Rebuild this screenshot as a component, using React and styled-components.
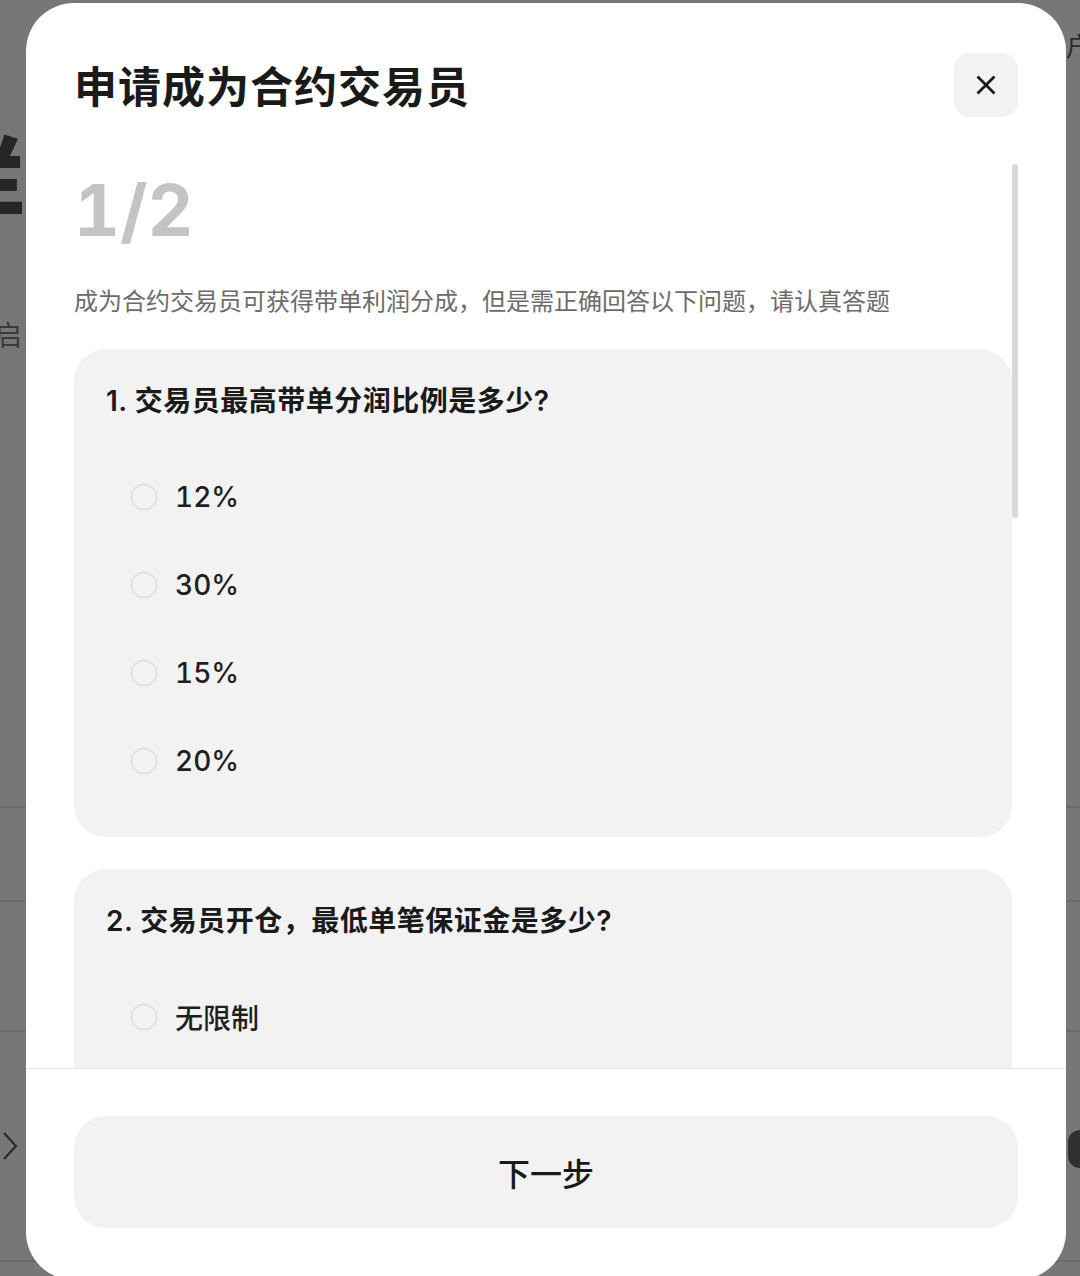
import React from 'react';
import styled, { createGlobalStyle } from 'styled-components';

const GlobalStyle = createGlobalStyle`
  * { box-sizing: border-box; }
  body {
    margin: 0;
    background: #777777;
    font-family: "Inter", "Noto Sans CJK SC", sans-serif;
  }
`;

const Page = styled.div`
  position: relative;
  width: 1080px;
  height: 1276px;
  overflow: hidden;
  background: #777777;
`;

/* the page behind the overlay */
const TopBar = styled.div`
  height: 80px;
  display: flex;
  justify-content: flex-end;
  align-items: flex-start;
  padding-top: 26px;
  font-size: 26px;
  color: #2b2b2b;
`;

const NavText = styled.span`
  margin-right: -12px;
`;

const Hero = styled.div`
  margin-top: 54px;
  margin-left: -84px;
  font-size: 110px;
  line-height: 110px;
  font-weight: 700;
  color: #262626;
`;

const HeroSub = styled.div`
  margin-top: 72px;
  margin-left: -6px;
  font-size: 28px;
  line-height: 40px;
  color: #3a3a3a;
`;

const BgList = styled.div`
  margin-top: 450px;
  border-bottom: 2px solid #6a6a6a;
`;

const BgRow = styled.div`
  height: ${p => p.h}px;
  border-top: 2px solid #6a6a6a;
  display: flex;
  align-items: center;
  justify-content: space-between;
`;

const Chevron = styled.svg`
  margin-left: 2px;
`;

const BgToggle = styled.span`
  width: 40px;
  height: 38px;
  border-radius: 12px;
  background: #303030;
  margin-right: -28px;
  margin-top: 6px;
`;

/* modal */
const Modal = styled.div`
  position: absolute;
  left: 26px;
  top: 3px;
  width: 1040px;
  height: 1277px;
  background: #ffffff;
  border-radius: 48px;
  display: flex;
  flex-direction: column;
  overflow: hidden;
`;

const Header = styled.div`
  display: flex;
  align-items: center;
  justify-content: space-between;
  padding: 49px 48px 0 48px;
`;

const Title = styled.h1`
  margin: 0;
  padding-top: 5px;
  font-size: 43px;
  line-height: 60px;
  font-weight: 700;
  letter-spacing: 1px;
  color: #1a1a1a;
`;

const CloseButton = styled.button`
  width: 64px;
  height: 64px;
  border: none;
  border-radius: 16px;
  background: #f2f2f2;
  display: flex;
  align-items: center;
  justify-content: center;
  padding: 0;
  cursor: pointer;
`;

const Body = styled.div`
  position: relative;
  flex: 1;
  min-height: 0;
  margin: 24px 48px 0 48px;
  padding-right: 6px;
  overflow: hidden;
`;

const ScrollThumb = styled.div`
  position: absolute;
  right: 0;
  top: 23px;
  width: 6px;
  height: 354px;
  border-radius: 3px;
  background: #d9d9d9;
`;

const Step = styled.div`
  padding-top: 33px;
  font-size: 71px;
  line-height: 72px;
  font-weight: 700;
  color: #c4c4c4;
  font-variant-numeric: tabular-nums;
`;

const Intro = styled.p`
  margin: 38px 0 29px;
  font-size: 24px;
  line-height: 36px;
  color: #6b6b6b;
`;

const Card = styled.div`
  background: #f2f2f2;
  border-radius: 32px;
  padding: 32px;
  margin-bottom: 32px;
`;

const Question = styled.div`
  font-size: 28px;
  line-height: 40px;
  font-weight: 600;
  letter-spacing: 0.5px;
  color: #1a1a1a;
  margin-bottom: 32px;
`;

const Option = styled.label`
  height: 88px;
  display: flex;
  align-items: center;
  gap: 18px;
  padding-left: 25px;
  font-size: 28px;
  font-weight: 500;
  font-variant-numeric: tabular-nums;
  color: #1f1f1f;
  cursor: pointer;
`;

const Radio = styled.span`
  width: 26px;
  height: 26px;
  border-radius: 50%;
  border: 1.5px solid #d6d6d6;
  flex-shrink: 0;
`;

const Footer = styled.div`
  border-top: 1px solid #e6e6e6;
  padding: 47px 48px 52px 48px;
`;

const NextButton = styled.button`
  width: 100%;
  height: 112px;
  border: none;
  border-radius: 32px;
  background: #f2f2f2;
  font-family: inherit;
  font-size: 32px;
  font-weight: 500;
  color: #1a1a1a;
  cursor: pointer;
`;

const questions = [
  {
    title: '1. 交易员最高带单分润比例是多少?',
    options: ['12%', '30%', '15%', '20%']
  },
  {
    title: '2. 交易员开仓，最低单笔保证金是多少?',
    options: ['无限制', '10 USDT', '50 USDT', '100 USDT']
  }
];

const CloseIcon = () => (
  <svg width="24" height="24" viewBox="0 0 24 24" fill="none">
    <path d="M3.5 3.5 L20.5 20.5 M20.5 3.5 L3.5 20.5" stroke="#1a1a1a" strokeWidth="2.8" />
  </svg>
);

export default function App() {
  return (
    <>
      <GlobalStyle />
      <Page>
        <TopBar><NavText>户</NavText></TopBar>
        <Hero>详</Hero>
        <HeroSub>启</HeroSub>
        <BgList>
          <BgRow h={94} />
          <BgRow h={130} />
          <BgRow h={230}>
            <Chevron width="16" height="30" viewBox="0 0 16 30" fill="none">
              <path d="M2 2 L14 15 L2 28" stroke="#2b2b2b" strokeWidth="2.2" />
            </Chevron>
            <BgToggle />
          </BgRow>
        </BgList>

        <Modal>
          <Header>
            <Title>申请成为合约交易员</Title>
            <CloseButton aria-label="关闭"><CloseIcon /></CloseButton>
          </Header>
          <Body>
            <Step>1/2</Step>
            <Intro>成为合约交易员可获得带单利润分成，但是需正确回答以下问题，请认真答题</Intro>
            {questions.map((q, i) => (
              <Card key={i}>
                <Question>{q.title}</Question>
                {q.options.map(opt => (
                  <Option key={opt}>
                    <Radio />
                    {opt}
                  </Option>
                ))}
              </Card>
            ))}
            <ScrollThumb />
          </Body>
          <Footer>
            <NextButton>下一步</NextButton>
          </Footer>
        </Modal>
      </Page>
    </>
  );
}
